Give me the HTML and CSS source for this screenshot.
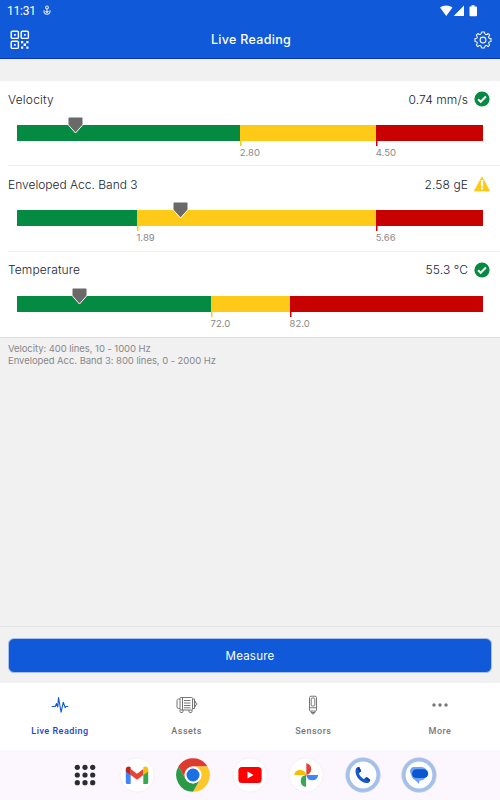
FILE: index.html
```html
<!DOCTYPE html>
<html lang="en">
    <head>
        <meta charset="utf-8">
        <title>Live Reading</title>
        <link rel="stylesheet" href="styles.css">
    </head>
    <body>
        <div class="screen">
            <header class="header">
                <div class="status">
                    <span class="time">11:31</span>
                    <svg class="mic" width="8" height="11" viewBox="0 0 8 11" fill="none" stroke="#dce6fa" stroke-width="1.1"><circle cx="4" cy="2.4" r="1.4"/><path d="M4 3.8V7M1.3 5.2C.3 7.5 2 9.3 4 9.3s3.700-1.800 2.700-4.100M2.500 6.200L4 7.700l1.500-1.500"/></svg>
                    <svg class="signals" width="38" height="12" viewBox="0 0 38 12" fill="#fff"><path d="M0 2.500C3.500-.3 9-.3 12.500 2.500L6.250 11zM24 .5V11H13.700zM30 1.500h1.500V.2h3v1.300H36q1 0 1 1v7.800q0 1-1 1h-5.500q-1 0-1-1V2q0-.5.500-.5z"/></svg>
                </div>
                <div class="appbar">
                    <svg class="qr" width="20" height="20" viewBox="0 0 20 20">
                        <g fill="none" stroke="#fff" stroke-width="1.400"><rect x="1.200" y="1.200" width="7.200" height="7.200" rx="1.200"/><rect x="11.200" y="1.200" width="7.200" height="7.200" rx="1.200"/><rect x="1.200" y="11.200" width="7.200" height="7.200" rx="1.200"/></g>
                        <path fill="#fff" d="M4 4h1.700v1.700H4zM14 4h1.700v1.700H14zM4 14h1.700v1.700H4zM11 11h2.200v2.200H11zM16.300 11h2.200v2.200h-2.200zM13.600 13.600h2.400V16h-2.400zM11 16.500h2.200v2.200H11zM16.300 16.500h2.200v2.200h-2.200z"/>
                    </svg>
                    <h1>Live Reading</h1>
                    <svg class="gear" width="18" height="18" viewBox="0 0 18 18" fill="none" stroke="#fff" stroke-width="1.050" stroke-linejoin="round"><circle cx="9" cy="9" r="2.900"/><path d="M7.600 1h2.800q.3 2.300 1.300 2.600t2.500-1.100l1.500 1.600q-1.400 1.700-1 2.600T17 7.600v2.800q-2 .1-2.300 1.100t1 2.500l-1.600 1.600q-1.500-1.300-2.400-1t-1.300 2.400H7.600q-.3-2.100-1.300-2.500t-2.500 1.100L2.300 14q1.300-1.500 1-2.500T1 10.400V7.600q2-.1 2.300-1t-1-2.500l1.600-1.600q1.500 1.300 2.400 1T7.600 1z"/></svg>
                </div>
            </header>

            <main class="content">
                <section class="readings">
                    <div class="reading">
                        <div class="title">
                            <span class="name velocity">Velocity</span>
                            <span class="value">0.74 mm/s</span>
                            <svg class="state" width="16" height="16" viewBox="0 0 16 16"><circle cx="8" cy="8" r="7.600" fill="#048a41"/><path d="M4 8.200l2.700 2.600 5.200-5.300" fill="none" stroke="#fff" stroke-width="2"/></svg>
                        </div>
                        <div class="gauge">
                            <div class="ok" style="width: 223.3px"></div>
                            <div class="warn" style="width: 136px"><span>2.80</span></div>
                            <div class="alarm"><span>4.50</span></div>
                            <svg class="marker" style="left: 50.500px" width="17" height="18" viewBox="0 0 17 18"><path d="M1 2.500Q1 1 2.500 1h12Q16 1 16 2.500V7.500Q16 8.500 15.200 9.500L8.500 17 1.800 9.500Q1 8.500 1 7.500z"/></svg>
                        </div>
                    </div>
                    <div class="reading">
                        <div class="title">
                            <span class="name band">Enveloped Acc. Band 3</span>
                            <span class="value">2.58 gE</span>
                            <svg class="state" width="16" height="16" viewBox="0 0 16 16"><path d="M8 .8L15.700 15H.3z" fill="#ffc917" stroke="#ffc917" stroke-width=".7" stroke-linejoin="round"/><path d="M6.900 4h2.200v6.400H6.900zM6.900 11.500h2.200v2H6.900z" fill="#fff"/></svg>
                        </div>
                        <div class="gauge">
                            <div class="ok" style="width: 120px"></div>
                            <div class="warn" style="width: 239.3px"><span>1.89</span></div>
                            <div class="alarm"><span>5.66</span></div>
                            <svg class="marker" style="left: 155px" width="17" height="18" viewBox="0 0 17 18"><path d="M1 2.500Q1 1 2.500 1h12Q16 1 16 2.500V7.500Q16 8.500 15.200 9.500L8.500 17 1.800 9.500Q1 8.500 1 7.500z"/></svg>
                        </div>
                    </div>
                    <div class="reading">
                        <div class="title">
                            <span class="name">Temperature</span>
                            <span class="value">55.3 °C</span>
                            <svg class="state" width="16" height="16" viewBox="0 0 16 16"><circle cx="8" cy="8" r="7.600" fill="#048a41"/><path d="M4 8.200l2.700 2.600 5.200-5.300" fill="none" stroke="#fff" stroke-width="2"/></svg>
                        </div>
                        <div class="gauge">
                            <div class="ok" style="width: 194px"></div>
                            <div class="warn" style="width: 79px"><span>72.0</span></div>
                            <div class="alarm"><span>82.0</span></div>
                            <svg class="marker" style="left: 54px" width="17" height="18" viewBox="0 0 17 18"><path d="M1 2.500Q1 1 2.500 1h12Q16 1 16 2.500V7.500Q16 8.500 15.200 9.500L8.500 17 1.800 9.500Q1 8.500 1 7.500z"/></svg>
                        </div>
                    </div>
                </section>
                <div class="notes">
                    <p>Velocity: 400 lines, 10 - 1000 Hz</p>
                    <p>Enveloped Acc. Band 3: 800 lines, 0 - 2000 Hz</p>
                </div>
            </main>

            <div class="action">
                <button type="button" class="measure">Measure</button>
            </div>

            <nav class="tabs">
                <a class="tab active">
                    <svg width="20" height="20" viewBox="0 0 20 20" fill="none" stroke="#1059d8" stroke-width="1.100" stroke-linejoin="round"><path d="M1.700 11.500h3.600l1.200-3 1.300 3.500L8.500 2.500l2.600 14.700 2.200-10 1.800 5.500.8-1.200h2.300"/></svg>
                    <span>Live Reading</span>
                </a>
                <a class="tab">
                    <svg width="22" height="20" viewBox="0 0 22 20" fill="none" stroke="#777" stroke-width="1"><rect x="4" y="2.500" width="12.500" height="12.500" rx="1"/><path d="M4 4H2.500Q1 4 1 5.500v6.500q0 1.500 1.500 1.500H4M16.500 4h2v9.500h-2M18.500 6.500h1v1.500q1.500 0 1.500 1t-1.500 1v1.500h-1M6.500 2.500v12.500M8 5.500h6.500M8 8h6.500M8 10.500h6.500M8 12.800h6.500M4 15v1.500q0 1 1 1h1q1 0 1-1V15M13 15v1.500q0 1 1 1h1q1 0 1-1V15"/></svg>
                    <span>Assets</span>
                </a>
                <a class="tab">
                    <svg width="20" height="20" viewBox="0 0 20 20" fill="none" stroke="#777" stroke-width="1"><path d="M8 1.200h4q1.500 0 1.500 1.500V15q0 1-1 1h-5q-1 0-1-1V2.700Q6.500 1.200 8 1.200zM6.500 12.800h7M8 16v1.500h4V16M9 17.500v1.300h2v-1.300"/><rect x="8.200" y="3" width="3.600" height="8" rx="1"/></svg>
                    <span>Sensors</span>
                </a>
                <a class="tab">
                    <svg width="20" height="20" viewBox="0 0 20 20" fill="#777"><circle cx="4" cy="10" r="1.700"/><circle cx="10" cy="10" r="1.700"/><circle cx="16" cy="10" r="1.700"/></svg>
                    <span>More</span>
                </a>
            </nav>

            <footer class="dock">
                <svg class="apps" width="22" height="22" viewBox="0 0 22 22" fill="#2b2b33"><circle cx="3.300" cy="3.300" r="2.600"/><circle cx="11" cy="3.300" r="2.600"/><circle cx="18.700" cy="3.300" r="2.600"/><circle cx="3.300" cy="11" r="2.600"/><circle cx="11" cy="11" r="2.600"/><circle cx="18.700" cy="11" r="2.600"/><circle cx="3.300" cy="18.700" r="2.600"/><circle cx="11" cy="18.700" r="2.600"/><circle cx="18.700" cy="18.700" r="2.600"/></svg>
                <!-- mail -->
                <svg width="36" height="36" viewBox="0 0 36 36"><circle cx="18" cy="18" r="17" fill="#fff" stroke="#f3f1f5"/><path d="M6.800 13.500l4.900 3.700V27H8.300q-1.500 0-1.500-1.500z" fill="#4285f4"/><path d="M29.200 13.500l-4.900 3.700V27h3.400q1.500 0 1.500-1.500z" fill="#34a853"/><path d="M11.700 12l6.300 4.800 6.300-4.800v6L18 22.700 11.700 18z" fill="#ea4335"/><path d="M6.800 14.500V12.200c0-2.600 2.700-3.700 4.900-2V18z" fill="#c5221f"/><path d="M29.200 14.500V12.200c0-2.600-2.700-3.700-4.900-2V18z" fill="#fbbc04"/></svg>
                <!-- browser -->
                <svg width="36" height="36" viewBox="0 0 36 36"><circle cx="18" cy="18" r="16.800" fill="#fff"/><path d="M3.450 9.600A16.800 16.800 0 0 1 32.550 9.600H18a8.400 8.400 0 0 0-7.270 12.600z" fill="#dd3b2e"/><path d="M32.550 9.600A16.800 16.800 0 0 1 18 34.800l7.270-12.600A8.400 8.400 0 0 0 18 9.600z" fill="#fcc72b"/><path d="M18 34.800A16.800 16.800 0 0 1 3.450 9.600l7.280 12.600a8.400 8.400 0 0 0 14.540 0z" fill="#2a9a49"/><circle cx="18" cy="18" r="8.400" fill="#fff"/><circle cx="18" cy="18" r="6.500" fill="#1b70e5"/></svg>
                <!-- video -->
                <svg width="36" height="36" viewBox="0 0 36 36"><circle cx="18" cy="18" r="17" fill="#fff" stroke="#f3f1f5"/><rect x="6.400" y="10" width="23.200" height="16" rx="3.500" fill="#f00"/><path d="M15.500 14.500v7l6-3.500z" fill="#fff"/></svg>
                <!-- photos -->
                <svg width="36" height="36" viewBox="0 0 36 36"><circle cx="18" cy="18" r="17" fill="#fff" stroke="#f3f1f5"/><path d="M18.300 6.200a6 6 0 0 1 0 11.800z" fill="#dc4437"/><path d="M30.200 18a6 6 0 0 1-11.900 0z" fill="#4285f4"/><path d="M18 30a6 6 0 0 1 0-11.900z" fill="#34a853"/><path d="M6.200 18A6 6 0 0 1 18 18z" fill="#fbbc04"/></svg>
                <!-- phone -->
                <svg width="36" height="36" viewBox="0 0 36 36"><circle cx="18" cy="18" r="17.200" fill="#a2c0ec" stroke="#c5c8d4" stroke-width=".8"/><circle cx="18" cy="18" r="13.400" fill="#fff"/><path d="M14.200 10l2 4-2.300 2.600c1 2.400 2.700 4.300 5 5.500l2.700-2 3.600 2.600c-.2 2.400-1.500 3.500-3.500 3.400C15.500 25.500 10.500 20 10.500 14c0-2.500 1.300-4 3.700-4z" fill="#1959cf"/><path d="M14.200 10l2 4-1.500 1.600-2.700-4.800zM20.200 21.200l1.400-1.100 3.600 2.600-.5 1.700z" fill="#123f9e"/></svg>
                <!-- messages -->
                <svg width="36" height="36" viewBox="0 0 36 36"><circle cx="18" cy="18" r="17.200" fill="#a2c0ec" stroke="#c5c8d4" stroke-width=".8"/><circle cx="18" cy="18" r="13.400" fill="#fff"/><path d="M12.500 10H20q4.500 0 5.500 3.500L24 21q-1.500 2.500-4.500 2.500h-1L18 27l-4-4Q10.500 21.500 10 17q-1.500-2-.7-4.200Q10 10 12.500 10z" fill="#6da2f8"/><rect x="11" y="12.300" width="16.200" height="8.600" rx="4.300" fill="#0b57d0"/></svg>
            </footer>
        </div>
    </body>
</html>
```
FILE: styles.css
```css
*{
    margin:0;
    padding:0;
    box-sizing:border-box;
}
body{
    font-family:Inter, "Liberation Sans", sans-serif;
    color:#141d33;
}
.screen{
    width:500px;
    height:800px;
    display:flex;
    flex-direction:column;
    background-color:#f1f1f1;
    overflow:hidden;
}
.header{
    height:59px;
    background-color:#1059d8;
    border-bottom:1px solid #0634c8;
    color:#fff;
}
.status{
    height:21px;
    display:flex;
    align-items:center;
    padding:0 21px 0 7px;
    font-family:Roboto, sans-serif;
    font-size:12px;
}
.time{
    width:29px;
    letter-spacing:-.2px;
}
.mic{
    margin-left:7px;
    margin-top:-1px;
}
.signals{
    margin-left:auto;
    margin-right:1px;
}
.appbar{
    height:37px;
    display:flex;
    align-items:center;
    justify-content:space-between;
    padding:0 8px 0 10px;
}
h1{
    margin-right:2px;
    font-size:12.500px;
    font-weight:500;
    letter-spacing:.3px;
}
.content{
    flex:1;
    padding-top:22px;
}
.readings{
    background-color:#fff;
    border-bottom:1px solid #dedede;
}
.reading{
    height:85.300px;
    margin-left:8px;
    padding-top:9px;
    border-bottom:1px solid #f0f0f0;
}
.reading:last-child{
    border-bottom:0;
}
.title{
    height:18px;
    display:flex;
    align-items:center;
    padding-right:10px;
    font-size:12px;
    font-weight:300;
    letter-spacing:.1px;
}
.velocity{
    letter-spacing:.2px;
}
.band{
    letter-spacing:0;
}
.value{
    margin-left:auto;
    margin-right:6px;
}
.gauge{
    position:relative;
    display:flex;
    width:466.500px;
    height:16px;
    margin:17px 0 0 8.500px;
}
.ok{
    background-color:#048a41;
}
.warn{
    background-color:#ffc917;
}
.alarm{
    flex:1;
    background-color:#c90000;
}
.gauge span{
    display:block;
    width:40px;
    margin-top:16px;
    padding-top:5px;
    font-size:9.500px;
    line-height:13px;
    color:#888;
    background:linear-gradient(#ffc917, #ffc917) no-repeat 0 0 / 1.500px 5px;
}
.gauge .alarm span{
    background-image:linear-gradient(#c90000, #c90000);
}
.marker{
    position:absolute;
    top:-9px;
    fill:#696969;
    stroke:#fff;
}
.notes{
    padding:5px 8px;
    font-size:9.500px;
    line-height:12px;
    letter-spacing:-.06px;
    color:#888;
}
.action{
    height:57px;
    padding:11px 8px;
    border-top:1px solid #e3e3e3;
}
.measure{
    display:block;
    width:484px;
    height:35px;
    border:1px solid #a9c0ec;
    border-radius:6px;
    background-color:#1059d8;
    color:#fff;
    font-family:inherit;
    font-size:11.500px;
    letter-spacing:.2px;
}
.tabs{
    height:67px;
    display:flex;
    justify-content:space-between;
    padding:12px 0 0;
    background-color:#fff;
}
.tab{
    width:120px;
    display:flex;
    flex-direction:column;
    align-items:center;
    gap:10px;
    font-family:Roboto, sans-serif;
    font-size:9px;
    font-weight:500;
    line-height:13px;
    letter-spacing:.5px;
    color:#777;
}
.active{
    color:#1646cf;
}
.dock{
    height:50px;
    display:flex;
    align-items:center;
    gap:20.500px;
    padding-left:74px;
    background-color:#fcf6fe;
}
.apps{
    margin-right:2px;
}
```
